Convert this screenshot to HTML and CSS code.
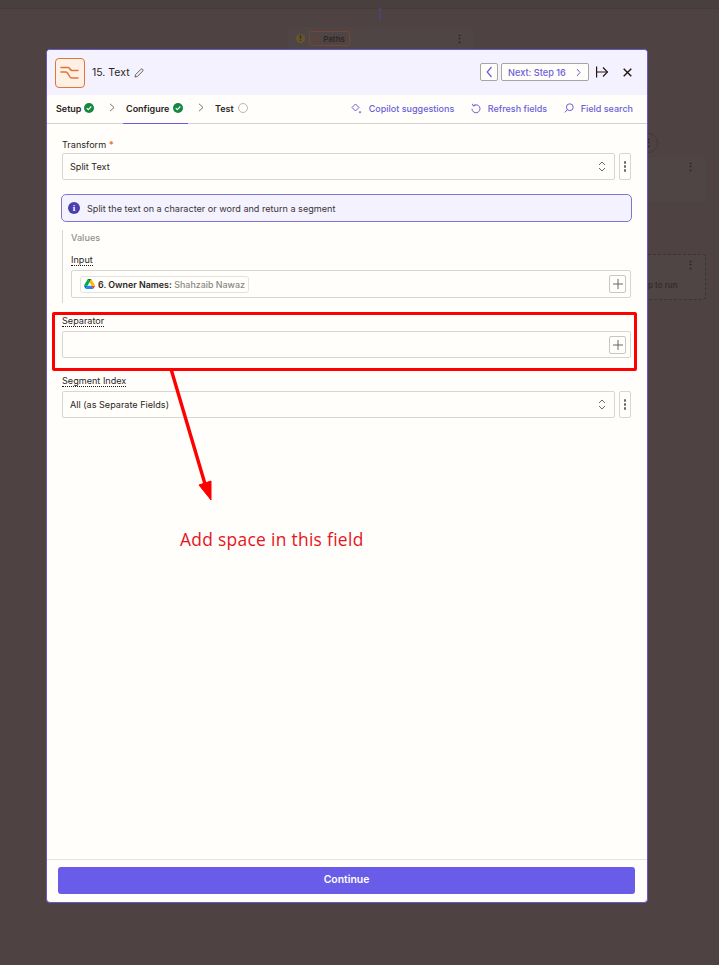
FILE: index.html
```html
<!DOCTYPE html>
<html lang="en">
<head>
<meta charset="utf-8">
<title>Text step</title>
<link rel="stylesheet" href="styles.css">
</head>
<body>
<div class="canvas">
  <div class="canvas-top"></div>
  <div class="canvas-link"></div>
  <div class="canvas-node node-paths">
    <span class="warn">!</span>
    <span class="paths-tag">
      <svg width="7" height="8" viewBox="0 0 7 8" fill="none" stroke="#6b3f33" stroke-width="1.200"><path d="M1 7.500V2.500c0-1 1-1.500 2-1.500h3M3.500 7.500V3.500h2.500"/></svg>
      Paths
    </span>
    <span class="node-dots">⋮</span>
  </div>
  <div class="canvas-node node-right"><span class="node-dots">⋮</span></div>
  <div class="canvas-node node-dashed"><span class="node-dots">⋮</span><span class="node-text">p to run</span></div>
  <div class="canvas-circle"><span class="node-dots">⋮</span></div>
</div>

<main class="modal">
  <header class="modal-head">
    <div class="app-icon">
      <svg width="22" height="14" viewBox="0 0 22 14" fill="none" stroke="#e2733a" stroke-width="1.600" stroke-linecap="round"><path d="M2 1.500h7c2 0 2 3 4 3h6"/><path d="M2 6h5c2.500 0 3 6 5.500 6H19"/></svg>
    </div>
    <div class="step-title">15. Text</div>
    <svg class="pencil" width="10" height="10" viewBox="0 0 10 10" fill="none" stroke="#55504d" stroke-width="0.900"><path d="M1 9l.5-2.300L7 1.200c.4-.4 1-.4 1.400 0l.4.4c.4.4.4 1 0 1.400L3.300 8.500z"/></svg>
    <div class="head-actions">
      <button class="nav-btn nav-prev" type="button" aria-label="Previous">
        <svg width="7" height="12" viewBox="0 0 7 12" fill="none" stroke="#6a5fd8" stroke-width="1.200"><path d="M5.500 1L1.200 6l4.300 5"/></svg>
      </button>
      <button class="nav-btn nav-next" type="button">
        <span>Next: Step 16</span>
        <svg width="5" height="9" viewBox="0 0 5 9" fill="none" stroke="#6a5fd8" stroke-width="1"><path d="M1 1l3 3.500L1 8"/></svg>
      </button>
      <svg class="head-expand" width="12" height="12" viewBox="0 0 12 12" fill="none" stroke="#201515" stroke-width="1.200"><path d="M.6 .5v11"/><path d="M.6 6H11.500"/><path d="M7 1.500L11.500 6 7 10.500"/></svg>
      <svg class="head-close" width="9" height="9" viewBox="0 0 9 9" fill="none" stroke="#201515" stroke-width="1.400"><path d="M.7 .7l7.600 7.600M8.300 .7L.7 8.300"/></svg>
    </div>
  </header>

  <nav class="tabs">
    <div class="tab tab-setup">Setup
      <svg class="check" width="10" height="10" viewBox="0 0 10 10"><circle cx="5" cy="5" r="5" fill="#13883f"/><path d="M2.700 5.100l1.600 1.600 3-3.200" fill="none" stroke="#fff" stroke-width="1.100"/></svg>
    </div>
    <svg class="tab-chev" width="6" height="9" viewBox="0 0 6 9" fill="none" stroke="#6b6662" stroke-width="0.900"><path d="M1 .8l4 3.700-4 3.700"/></svg>
    <div class="tab tab-active">Configure
      <svg class="check" width="10" height="10" viewBox="0 0 10 10"><circle cx="5" cy="5" r="5" fill="#13883f"/><path d="M2.700 5.100l1.600 1.600 3-3.200" fill="none" stroke="#fff" stroke-width="1.100"/></svg>
    </div>
    <svg class="tab-chev" width="6" height="9" viewBox="0 0 6 9" fill="none" stroke="#6b6662" stroke-width="0.900"><path d="M1 .8l4 3.700-4 3.700"/></svg>
    <div class="tab tab-test">Test
      <svg class="check" width="10" height="10" viewBox="0 0 10 10"><circle cx="5" cy="5" r="4.500" fill="none" stroke="#a8a5a1" stroke-width="0.800"/></svg>
    </div>
    <div class="tab-tools">
      <span class="tool">
        <svg width="11" height="11" viewBox="0 0 11 11" fill="none" stroke="#6a5fd8" stroke-width="1"><path d="M4.500 1L8 4.500 4.500 8 1 4.500z"/><path d="M9 8v2.400M7.800 9.200h2.400" stroke-width="0.800"/></svg>
        Copilot suggestions
      </span>
      <span class="tool">
        <svg width="10" height="11" viewBox="0 0 10 11" fill="none" stroke="#6a5fd8" stroke-width="1"><path d="M2.300 2.800A4 4 0 1 1 1 5.800"/><path d="M1.300 .8l1 2.200 2.200-.6"/></svg>
        Refresh fields
      </span>
      <span class="tool">
        <svg width="10" height="10" viewBox="0 0 10 10" fill="none" stroke="#6a5fd8" stroke-width="1"><circle cx="5.800" cy="4.200" r="3.400"/><path d="M3.300 6.700L.8 9.400"/></svg>
        Field search
      </span>
    </div>
  </nav>

  <section class="form">
    <div class="field field-transform">
      <div class="label">Transform <span class="req">*</span></div>
      <div class="row">
        <div class="box select">Split Text
          <svg class="updown" width="8" height="11" viewBox="0 0 8 11" fill="none" stroke="#5c5753" stroke-width="0.900"><path d="M1 4l3-3 3 3M1 7l3 3 3-3"/></svg>
        </div>
        <button class="kebab" type="button" aria-label="More"><i></i><i></i><i></i></button>
      </div>
    </div>

    <div class="info">
      <span class="info-icon">i</span>
      Split the text on a character or word and return a segment
    </div>

    <div class="values">
      <div class="values-title">Values</div>
      <div class="label dotted input-label">Input</div>
      <div class="box input-box">
        <span class="chip">
          <svg width="11" height="10" viewBox="0 0 87 78"><path fill="#0066da" d="M6.600 66.900l3.800 6.600c.8 1.400 1.900 2.500 3.200 3.300L28 53H0c0 1.600.4 3.100 1.200 4.500z"/><path fill="#00ac47" d="M43.700 25L29.400 1.200c-1.300.8-2.400 1.900-3.200 3.300L1.200 48.500C.4 49.900 0 51.400 0 53h28z"/><path fill="#ea4335" d="M73.600 76.800c1.300-.8 2.400-1.900 3.200-3.300l1.600-2.800 7.700-13.300c.8-1.400 1.200-2.900 1.200-4.500H59.400l6 11.700z"/><path fill="#00832d" d="M43.700 25L58 1.200C56.600.4 55 0 53.400 0H34c-1.600 0-3.200.5-4.600 1.200z"/><path fill="#2684fc" d="M59.800 53H27.500L13.600 76.800c1.400.8 3 1.200 4.600 1.200h51c1.600 0 3.200-.5 4.600-1.200z"/><path fill="#ffba00" d="M73.400 26.500L60.700 4.500c-.8-1.400-1.900-2.500-3.200-3.300L43.700 25l16.100 28h27.400c0-1.600-.4-3.100-1.200-4.500z"/></svg>
          <b>6. Owner Names:</b>&nbsp;<span class="chip-value">Shahzaib Nawaz</span>
        </span>
        <button class="plus" type="button" aria-label="Add"><svg width="10" height="10" viewBox="0 0 10 10" stroke="#6b6662" stroke-width="1"><path d="M5 0v10M0 5h10"/></svg></button>
      </div>
    </div>

    <div class="field field-sep">
      <div class="label dotted">Separator</div>
      <div class="box input-box sep-box">
        <button class="plus" type="button" aria-label="Add"><svg width="10" height="10" viewBox="0 0 10 10" stroke="#6b6662" stroke-width="1"><path d="M5 0v10M0 5h10"/></svg></button>
      </div>
    </div>

    <div class="field field-seg">
      <div class="label dotted">Segment Index</div>
      <div class="row">
        <div class="box select">All (as Separate Fields)
          <svg class="updown" width="8" height="11" viewBox="0 0 8 11" fill="none" stroke="#5c5753" stroke-width="0.900"><path d="M1 4l3-3 3 3M1 7l3 3 3-3"/></svg>
        </div>
        <button class="kebab" type="button" aria-label="More"><i></i><i></i><i></i></button>
      </div>
    </div>
  </section>

  <footer class="modal-foot">
    <button class="continue" type="button">Continue</button>
  </footer>
</main>

<div class="mark-box"></div>
<svg class="mark-arrow" width="60" height="140" viewBox="0 0 60 140" fill="none">
  <path d="M2 2l34 115" stroke="#fe0000" stroke-width="3.400"/>
  <path d="M30 118l12-4 0 19z" fill="#fe0000" stroke="#fe0000" stroke-width="1"/>
</svg>
<div class="mark-note">Add space in this field</div>
</body>
</html>
```

FILE: styles.css
```css
* { box-sizing: border-box; }
html, body { margin: 0; height: 100%; }
body {
  width: 719px;
  height: 965px;
  overflow: hidden;
  position: relative;
  background: #4e4242;
  font-family: Inter, "Liberation Sans", sans-serif;
  font-size: 9.100px;
  color: #2b2523;
}
button { font-family: inherit; padding: 0; cursor: pointer; }

/* dimmed canvas behind the modal */
.canvas { position: absolute; inset: 0; }
.canvas-top { position: absolute; left: 0; right: 0; top: 0; height: 9px; background: #4a3f3f; border-bottom: 1px solid #463c3c; }
.canvas-link { position: absolute; left: 379px; top: 8px; width: 2px; height: 12px; background: #4d4270; }
.canvas-node { position: absolute; background: #504545; }
.node-paths { left: 288px; top: 27px; width: 185px; height: 23px; display: flex; align-items: center; padding: 0 8px; font-size: 8px; color: #2e2626; }
.warn { width: 9px; height: 9px; border-radius: 50%; background: #65552c; color: #2e2626; text-align: center; line-height: 9px; font-size: 7px; font-weight: 700; }
.paths-tag { margin-left: 4px; width: 41px; height: 15px; display: flex; align-items: center; gap: 3px; border: 1px solid #744638; border-radius: 3px; padding: 0 4px; font-weight: 600; }
.node-dots { font-size: 11px; font-weight: 700; color: #2a2222; }
.node-paths .node-dots { margin-left: auto; }
.node-right { left: 648px; top: 157px; width: 57px; height: 45px; display: flex; justify-content: flex-end; padding: 3px 9px; }
.node-dashed { left: 648px; top: 254px; width: 58px; height: 46px; border: 1px dashed #3d3333; border-left: 0; border-radius: 0 4px 4px 0; padding: 3px 9px; text-align: right; }
.node-dashed .node-dots { display: block; }
.node-text { position: absolute; left: 0; top: 25px; font-size: 8px; font-weight: 600; color: #362d2d; }
.canvas-circle { position: absolute; left: 638px; top: 133px; width: 20px; height: 20px; border: 1px solid #443939; border-radius: 50%; display: flex; align-items: center; justify-content: center; }

/* modal */
.modal {
  position: absolute;
  left: 46px;
  top: 49px;
  width: 602px;
  height: 854px;
  background: #fffefb;
  border: 1px solid #6759c4;
  border-radius: 4px;
  display: flex;
  flex-direction: column;
  overflow: hidden;
}
.modal-head { height: 45px; flex: none; background: #f4f2fe; display: flex; align-items: center; padding: 0 15px 0 8px; }
.app-icon { width: 30px; height: 30px; flex: none; background: #fff0e6; border: 1px solid #e2733a; border-radius: 4px; display: flex; align-items: center; justify-content: center; }
.step-title { margin-left: 7px; font-size: 10.500px; color: #2b2523; }
.pencil { margin-left: 4px; }
.head-actions { margin-left: auto; display: flex; align-items: center; margin-top: -1px; }
.nav-btn { height: 18px; background: #fffefb; border: 1px solid #a8a5a1; border-radius: 2px; display: flex; align-items: center; color: #6a5fd8; font-size: 9.200px; font-weight: 500; }
.nav-prev { width: 18px; justify-content: center; }
.nav-next { width: 88px; margin-left: 3px; padding: 0 7px 0 6px; justify-content: space-between; }
.head-expand { margin-left: 7px; }
.head-close { margin-left: 15px; }

.tabs { height: 29px; flex: none; background: #fffefb; border-bottom: 1px solid #d4d2cf; display: flex; align-items: stretch; padding: 0 14px 0 9px; }
.tab { display: flex; align-items: center; padding-bottom: 2px; font-size: 9px; font-weight: 600; color: #2b2523; }
.check { margin-left: 4px; }
.tab-setup { width: 53px; }
.tab-setup .check { margin-left: 3px; }
.tab-chev { align-self: center; margin-top: -3px; }
.tab-active { margin-left: 8px; padding: 0 3px 2px; width: 65px; border-bottom: 1px solid #6a5fd8; margin-bottom: -1px; white-space: nowrap; }
.tab-active + .tab-chev { margin-left: 10px; }
.tab-test { margin-left: 11px; }
.tab-test .check { margin-left: 4px; }
.tab-tools { margin-left: auto; padding-bottom: 2px; display: flex; align-items: center; gap: 16.500px; color: #6a5fd8; font-size: 9px; font-weight: 500; }
.tool { display: flex; align-items: center; gap: 7px; }

.form { flex: 1; padding: 15px 16px 0 15px; display: flex; flex-direction: column; }
.label { font-size: 9.100px; line-height: 12px; color: #2b2523; }
.req { color: #e2733a; font-weight: 700; }
.dotted { width: fit-content; border-bottom: 1px dotted #201515; line-height: 11px; }
.row { display: flex; gap: 4px; margin-top: 2px; }
.box { background: #fffefb; border: 1px solid #d8d6d2; border-radius: 2px; display: flex; align-items: center; font-size: 9.100px; }
.select { flex: 1; height: 27px; padding: 0 8px 0 7px; position: relative; }
.updown { margin-left: auto; }
.kebab { width: 12px; height: 27px; background: #fffefb; border: 1px solid #d8d6d2; border-radius: 2px; display: flex; flex-direction: column; align-items: center; justify-content: center; gap: 1.500px; }
.kebab i { width: 2.500px; height: 2.500px; border-radius: 50%; background: #6e6965; display: block; }

.info { margin: 14px -1px 0 -1px; height: 28px; background: #f4f2fe; border: 1px solid #7f75d2; border-radius: 5px; display: flex; align-items: center; padding: 0 6px; font-size: 9.100px; color: #3b3533; }
.info-icon { width: 12px; height: 12px; margin-right: 7px; border-radius: 50%; background: #4b3fb0; color: #fff; font-family: "Liberation Serif", serif; font-weight: 700; font-size: 9px; line-height: 12px; text-align: center; }

.values { margin-top: 8px; height: 73px; border-left: 1px solid #d8d6d2; padding-left: 8px; }
.values-title { padding-top: 2px; font-size: 9.100px; line-height: 12px; font-weight: 500; color: #93908c; }
.input-label { margin-top: 10px; }
.input-box { height: 28px; margin-top: 4px; padding: 0 4px 0 8px; }
.chip { height: 17px; display: flex; align-items: center; padding: 0 3px; border: 1px solid #e5e3df; border-radius: 3px; font-size: 8.900px; background: #fffefb; }
.chip svg { margin-right: 3px; }
.chip b { font-weight: 600; }
.chip-value { color: #8a8682; font-weight: 500; }
.plus { margin-left: auto; width: 17px; height: 18px; background: #fffefb; border: 1px solid #c9c7c3; border-radius: 2px; display: flex; align-items: center; justify-content: center; }

.field-sep { margin-top: 12px; }
.sep-box { height: 27px; margin-top: 4px; }
.field-seg { margin-top: 17px; }
.field-seg .row { margin-top: 4px; }

.modal-foot { flex: none; height: 43px; border-top: 1px solid #e6e4e0; padding: 7px 12px 0 11px; }
.continue { display: block; width: 100%; height: 27px; border: 0; border-radius: 3px; background: #695ce8; color: #fffefb; font-size: 10.400px; font-weight: 600; padding-bottom: 2px; }

/* red annotations on top of the screenshot */
.mark-box { position: absolute; left: 52px; top: 312px; width: 585px; height: 59px; border: 3.500px solid #fe0000; border-radius: 2px; }
.mark-arrow { position: absolute; left: 169px; top: 367px; }
.mark-note { position: absolute; left: 180px; top: 527px; font-family: "Open Sans", sans-serif; font-size: 17.400px; letter-spacing: 0.300px; color: #e5141c; }
```
